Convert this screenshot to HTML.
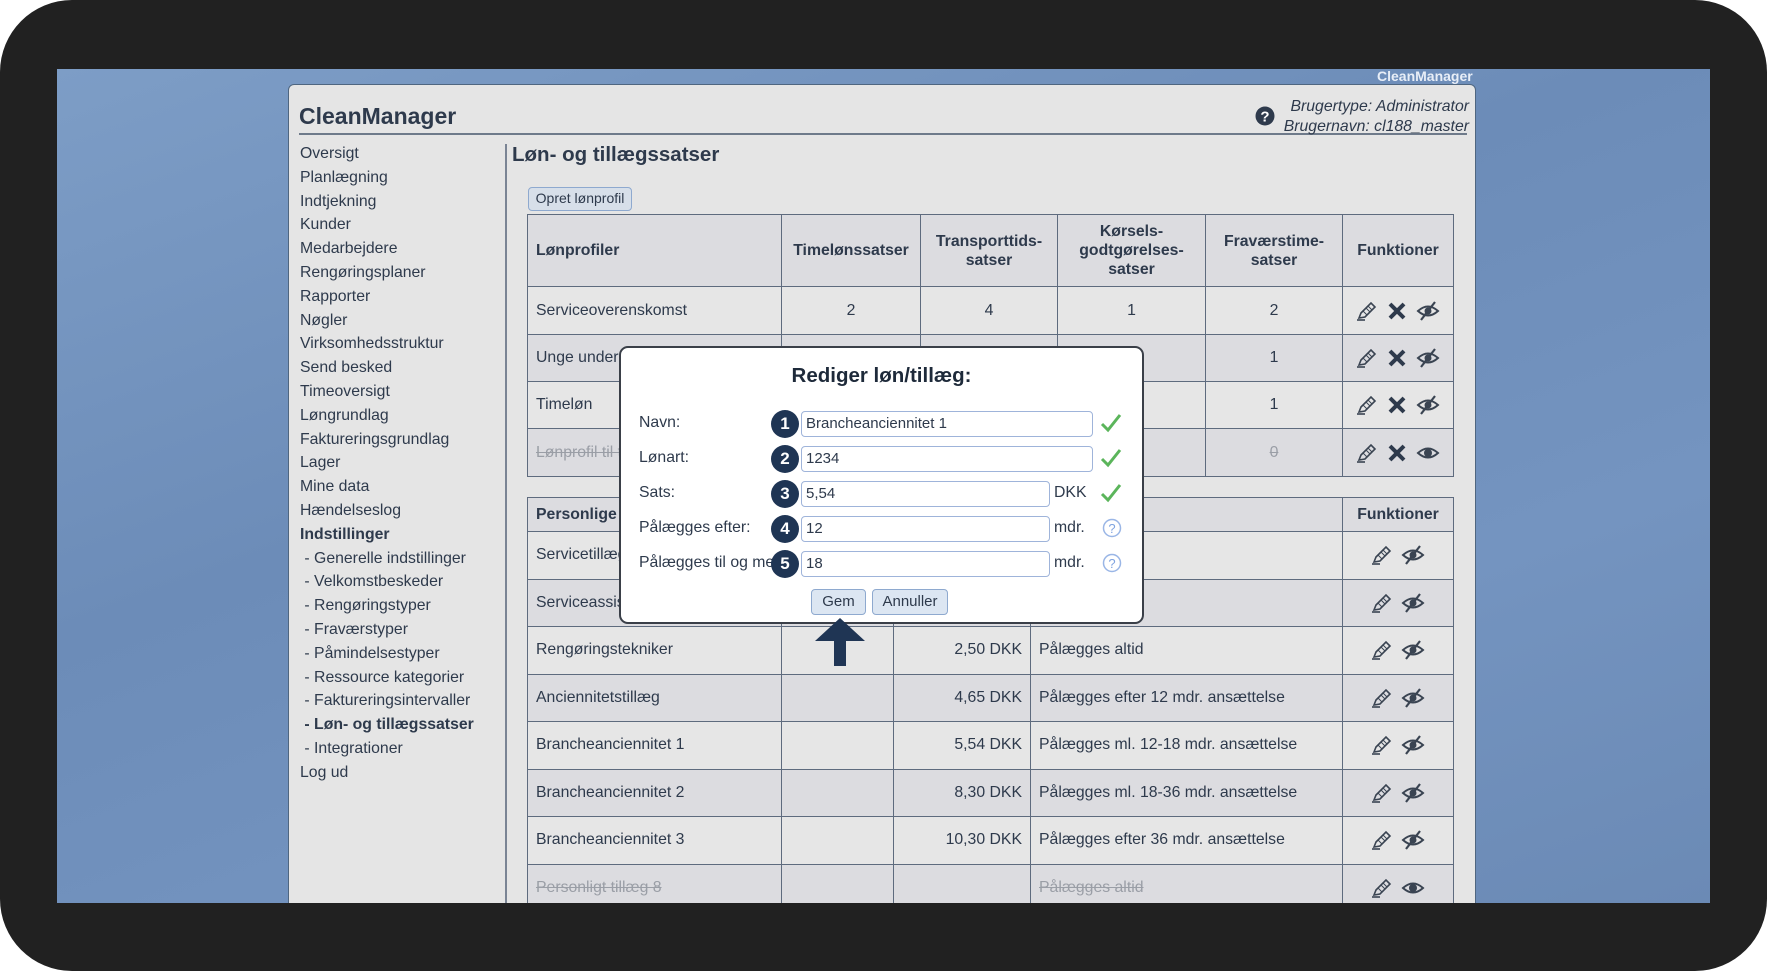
<!DOCTYPE html>
<html><head><meta charset="utf-8">
<style>
*{box-sizing:border-box;margin:0;padding:0}
html,body{width:1767px;height:971px;overflow:hidden}
body{background:#fff;font-family:"Liberation Sans",Arial,sans-serif;color:#2e3a4c;position:relative}
.frame{position:absolute;left:0;top:0;width:1767px;height:971px;background:#212121;border-radius:72px}
.screen{position:absolute;left:57px;top:69px;width:1653px;height:834px;overflow:hidden;background:linear-gradient(160deg,#7d9dc6 0%,#6c8cb8 40%,#7494c0 70%,#6b8ab5 100%)}
.panel{position:absolute;left:231px;top:15px;width:1188px;height:830px;background:#e5e5e5;border-radius:6px 6px 0 0;border:1px solid #4f6680;overflow:hidden}
.abs{position:absolute}
.nav div{position:absolute;left:11px;font-size:15.8px;white-space:nowrap;height:24px;line-height:24px}
table{border-collapse:collapse;table-layout:fixed;position:absolute;font-size:15.8px}
td,th{border:1.5px solid #5e6b7e;padding:0 8px;overflow:hidden;white-space:nowrap}
th{background:#dcdce0;font-weight:bold;text-align:center;line-height:19px}
td.c{text-align:center}td.r{text-align:right}
tr.d td{background:#dcdce0}
tr.l td{background:#e6e6e6}
.st{color:#9a9ea6;text-decoration:line-through}
.ic{display:flex;justify-content:center;gap:8px;align-items:center}
.modal{position:absolute;left:619px;top:346px;width:525px;height:278px;background:#fff;border:2px solid #3a3f48;border-radius:9px}
.lbl{position:absolute;left:18px;font-size:15.8px;white-space:nowrap}
.num{position:absolute;left:150px;width:28px;height:28px;border-radius:50%;background:#1f3554;color:#fff;font-weight:bold;font-size:17px;text-align:center;line-height:28px}
.inp{position:absolute;left:180px;height:26px;border:1.5px solid #9fb4da;border-radius:4px;background:#fff;font-size:15px;line-height:23px;padding-left:4px}
.unit{position:absolute;left:433px;font-size:15.8px}
.btn{position:absolute;top:241px;height:26px;background:#dce6f2;border:1.5px solid #8ea9cf;border-radius:4px;font-size:15px;text-align:center;line-height:23px}
</style></head><body>
<div class="frame"></div>
<div class="screen">
<div class="abs" style="left:1320px;top:-1px;color:#e8eef7;font-weight:bold;font-size:14px">CleanManager</div>
<div class="panel">
 <div class="abs" style="left:10px;top:18px;font-size:23px;font-weight:bold;color:#2e3a4c">CleanManager</div>
 <div class="abs" style="left:10px;top:48px;width:1168px;height:2px;background:#6e7a8a"></div>
 <svg class="abs" style="left:966px;top:21px" width="20" height="20" viewBox="0 0 20 20"><circle cx="10" cy="10" r="9.5" fill="#2e3a4c"/><text x="10" y="15.5" font-size="15" font-weight="bold" fill="#fff" text-anchor="middle" font-family="Liberation Sans">?</text></svg>
 <div class="abs" style="right:6px;top:12px;text-align:right;font-style:italic;font-size:15.8px;line-height:20px">Brugertype: Administrator<br>Brugernavn: cl188_master</div>
 <div class="abs" style="left:216px;top:59px;width:1.5px;height:900px;background:#7a8494"></div>
 <div class="nav" style="position:absolute;left:0;top:57px">
  <div style="top:0">Oversigt</div><div style="top:23.8px">Planlægning</div><div style="top:47.6px">Indtjekning</div><div style="top:71.4px">Kunder</div><div style="top:95.2px">Medarbejdere</div><div style="top:119px">Rengøringsplaner</div><div style="top:142.8px">Rapporter</div><div style="top:166.6px">Nøgler</div><div style="top:190.4px">Virksomhedsstruktur</div><div style="top:214.2px">Send besked</div><div style="top:238px">Timeoversigt</div><div style="top:261.8px">Løngrundlag</div><div style="top:285.6px">Faktureringsgrundlag</div><div style="top:309.4px">Lager</div><div style="top:333.2px">Mine data</div><div style="top:357px">Hændelseslog</div><div style="top:380.8px;font-weight:bold">Indstillinger</div><div style="top:404.6px">&nbsp;- Generelle indstillinger</div><div style="top:428.4px">&nbsp;- Velkomstbeskeder</div><div style="top:452.2px">&nbsp;- Rengøringstyper</div><div style="top:476px">&nbsp;- Fraværstyper</div><div style="top:499.8px">&nbsp;- Påmindelsestyper</div><div style="top:523.6px">&nbsp;- Ressource kategorier</div><div style="top:547.4px">&nbsp;- Faktureringsintervaller</div><div style="top:571.2px;font-weight:bold">&nbsp;- Løn- og tillægssatser</div><div style="top:595px">&nbsp;- Integrationer</div><div style="top:618.8px">Log ud</div>
 </div>
 <div class="abs" style="left:223px;top:58px;font-size:20.5px;font-weight:bold">Løn- og tillægssatser</div>
 <div class="abs" style="left:239px;top:102px;width:104px;height:24px;background:#d7dfe9;border:1.5px solid #8ea9cf;border-radius:4px;font-size:14px;line-height:21px;text-align:center">Opret lønprofil</div>
</div>
</div>

<svg width="0" height="0" style="position:absolute">
<defs>
<symbol id="pen" viewBox="0 0 22 22"><path d="M3 18 L5 13 L15 3 L19 7 L9 17 Z" fill="none" stroke="#3a4452" stroke-width="1.6"/><path d="M7 11 L11 15 M10 8 L14 12 M12 6 L16 10" stroke="#3a4452" stroke-width="1"/><path d="M1 20 H9" stroke="#3a4452" stroke-width="1.6"/></symbol>
<symbol id="x" viewBox="0 0 22 22"><path d="M4 4 L18 18 M18 4 L4 18" stroke="#2e3a4c" stroke-width="4"/></symbol>
<symbol id="eyes" viewBox="0 0 24 22"><path d="M2 11 Q12 2 22 11 Q12 20 2 11 Z" fill="none" stroke="#3a4452" stroke-width="2"/><circle cx="12" cy="11" r="3.5" fill="#3a4452"/><path d="M5 20 L19 2" stroke="#3a4452" stroke-width="2.2"/></symbol>
<symbol id="eye" viewBox="0 0 24 22"><path d="M2 11 Q12 2 22 11 Q12 20 2 11 Z" fill="none" stroke="#3a4452" stroke-width="2"/><circle cx="12" cy="11" r="4" fill="#3a4452"/></symbol>
</defs></svg>

<div style="position:absolute;left:57px;top:69px;width:1653px;height:834px;overflow:hidden">
<table style="left:470px;top:145px;width:926px">
<colgroup><col style="width:254px"><col style="width:139px"><col style="width:137px"><col style="width:148px"><col style="width:137px"><col style="width:111px"></colgroup>
<tr style="height:72px"><th style="text-align:left">Lønprofiler</th><th>Timelønssatser</th><th>Transporttids-<br>satser</th><th>Kørsels-<br>godtgørelses-<br>satser</th><th>Fraværstime-<br>satser</th><th>Funktioner</th></tr>
<tr class="l" style="height:48px"><td>Serviceoverenskomst</td><td class="c">2</td><td class="c">4</td><td class="c">1</td><td class="c">2</td><td><div class="ic"><svg width="22" height="22"><use href="#pen"/></svg><svg width="22" height="22"><use href="#x"/></svg><svg width="24" height="22"><use href="#eyes"/></svg></div></td></tr>
<tr class="d" style="height:47px"><td>Unge under 18</td><td></td><td></td><td></td><td class="c">1</td><td><div class="ic"><svg width="22" height="22"><use href="#pen"/></svg><svg width="22" height="22"><use href="#x"/></svg><svg width="24" height="22"><use href="#eyes"/></svg></div></td></tr>
<tr class="l" style="height:47px"><td>Timeløn</td><td></td><td></td><td></td><td class="c">1</td><td><div class="ic"><svg width="22" height="22"><use href="#pen"/></svg><svg width="22" height="22"><use href="#x"/></svg><svg width="24" height="22"><use href="#eyes"/></svg></div></td></tr>
<tr class="d" style="height:48px"><td class="st">Lønprofil til test</td><td></td><td></td><td></td><td class="c st">0</td><td><div class="ic"><svg width="22" height="22"><use href="#pen"/></svg><svg width="22" height="22"><use href="#x"/></svg><svg width="24" height="22"><use href="#eye"/></svg></div></td></tr>
</table>

<table style="left:470px;top:428px;width:926px">
<colgroup><col style="width:254px"><col style="width:112px"><col style="width:137px"><col style="width:312px"><col style="width:111px"></colgroup>
<tr style="height:34px"><th style="text-align:left">Personlige tillæg</th><th></th><th></th><th></th><th>Funktioner</th></tr>
<tr class="l" style="height:47.5px"><td>Servicetillæg</td><td></td><td></td><td></td><td><div class="ic"><svg width="22" height="22"><use href="#pen"/></svg><svg width="24" height="22"><use href="#eyes"/></svg></div></td></tr>
<tr class="d" style="height:47.5px"><td>Serviceassistent</td><td></td><td></td><td></td><td><div class="ic"><svg width="22" height="22"><use href="#pen"/></svg><svg width="24" height="22"><use href="#eyes"/></svg></div></td></tr>
<tr class="l" style="height:47.5px"><td>Rengøringstekniker</td><td></td><td class="r">2,50 DKK</td><td>Pålægges altid</td><td><div class="ic"><svg width="22" height="22"><use href="#pen"/></svg><svg width="24" height="22"><use href="#eyes"/></svg></div></td></tr>
<tr class="d" style="height:47.5px"><td>Anciennitetstillæg</td><td></td><td class="r">4,65 DKK</td><td>Pålægges efter 12 mdr. ansættelse</td><td><div class="ic"><svg width="22" height="22"><use href="#pen"/></svg><svg width="24" height="22"><use href="#eyes"/></svg></div></td></tr>
<tr class="l" style="height:47.5px"><td>Brancheanciennitet 1</td><td></td><td class="r">5,54 DKK</td><td>Pålægges ml. 12-18 mdr. ansættelse</td><td><div class="ic"><svg width="22" height="22"><use href="#pen"/></svg><svg width="24" height="22"><use href="#eyes"/></svg></div></td></tr>
<tr class="d" style="height:47.5px"><td>Brancheanciennitet 2</td><td></td><td class="r">8,30 DKK</td><td>Pålægges ml. 18-36 mdr. ansættelse</td><td><div class="ic"><svg width="22" height="22"><use href="#pen"/></svg><svg width="24" height="22"><use href="#eyes"/></svg></div></td></tr>
<tr class="l" style="height:47.5px"><td>Brancheanciennitet 3</td><td></td><td class="r">10,30 DKK</td><td>Pålægges efter 36 mdr. ansættelse</td><td><div class="ic"><svg width="22" height="22"><use href="#pen"/></svg><svg width="24" height="22"><use href="#eyes"/></svg></div></td></tr>
<tr class="d" style="height:47.5px"><td class="st">Personligt tillæg 8</td><td></td><td></td><td class="st">Pålægges altid</td><td><div class="ic"><svg width="22" height="22"><use href="#pen"/></svg><svg width="24" height="22"><use href="#eye"/></svg></div></td></tr>
</table>
</div>

<div class="modal">
 <div class="abs" style="left:0;width:521px;top:16px;text-align:center;font-size:20.5px;font-weight:bold;color:#1e2a3a">Rediger løn/tillæg:</div>
 <div class="lbl" style="top:66px">Navn:</div><div class="num" style="top:62px">1</div><div class="inp" style="top:63px;width:292px">Brancheanciennitet 1</div>
 <svg class="abs" style="left:478px;top:64px" width="24" height="22"><path d="M3 12 L9 18 L21 3" fill="none" stroke="#5bb55b" stroke-width="3"/></svg>
 <div class="lbl" style="top:101px">Lønart:</div><div class="num" style="top:97px">2</div><div class="inp" style="top:98px;width:292px">1234</div>
 <svg class="abs" style="left:478px;top:99px" width="24" height="22"><path d="M3 12 L9 18 L21 3" fill="none" stroke="#5bb55b" stroke-width="3"/></svg>
 <div class="lbl" style="top:136px">Sats:</div><div class="num" style="top:132px">3</div><div class="inp" style="top:133px;width:249px">5,54</div><div class="unit" style="top:136px">DKK</div>
 <svg class="abs" style="left:478px;top:134px" width="24" height="22"><path d="M3 12 L9 18 L21 3" fill="none" stroke="#5bb55b" stroke-width="3"/></svg>
 <div class="lbl" style="top:171px">Pålægges efter:</div><div class="num" style="top:167px">4</div><div class="inp" style="top:168px;width:249px">12</div><div class="unit" style="top:171px">mdr.</div>
 <svg class="abs" style="left:481px;top:170px" width="20" height="20"><circle cx="10" cy="10" r="8.5" fill="none" stroke="#9ab6e6" stroke-width="1.5"/><text x="10" y="15" font-size="13" fill="#7fa3e0" text-anchor="middle" font-family="Liberation Sans">?</text></svg>
 <div class="lbl" style="top:206px">Pålægges til og med:</div><div class="num" style="top:202px">5</div><div class="inp" style="top:203px;width:249px">18</div><div class="unit" style="top:206px">mdr.</div>
 <svg class="abs" style="left:481px;top:205px" width="20" height="20"><circle cx="10" cy="10" r="8.5" fill="none" stroke="#9ab6e6" stroke-width="1.5"/><text x="10" y="15" font-size="13" fill="#7fa3e0" text-anchor="middle" font-family="Liberation Sans">?</text></svg>
 <div class="btn" style="left:190px;width:55px">Gem</div>
 <div class="btn" style="left:251px;width:76px">Annuller</div>
</div>
<svg class="abs" style="left:812px;top:617px" width="56" height="50"><path d="M28 1 L53 24 L34 24 L34 49 L22 49 L22 24 L3 24 Z" fill="#1f3554"/></svg>
</body></html>
